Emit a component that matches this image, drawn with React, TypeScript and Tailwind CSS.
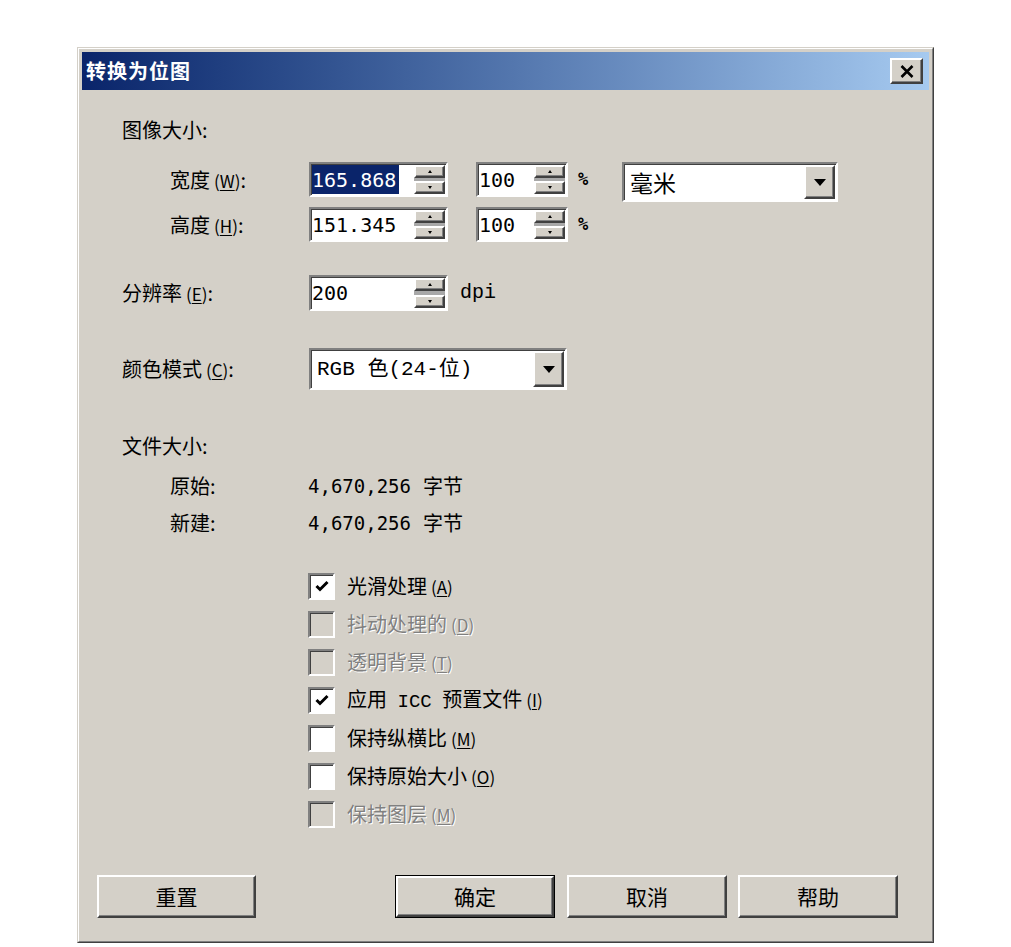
import React from "react";

const cjk = "font-['Noto_Sans_CJK_SC','Liberation_Sans',sans-serif]";
const mono = "font-['DejaVu_Sans_Mono','Noto_Sans_CJK_SC',monospace]";
const raised =
  "border-2 border-t-white border-l-white border-r-[#404040] border-b-[#404040] shadow-[inset_-1px_-1px_0_#808080] bg-[#d4d0c8]";
const sunken =
  "border-2 border-t-[#808080] border-l-[#808080] border-r-white border-b-white shadow-[inset_1px_1px_0_#404040]";
const disabledText = "text-[#808080] [text-shadow:1px_1px_0_#ffffff]";

const Key: React.FC<{ k: string }> = ({ k }) => (
  <span className="ml-[4px] text-[17px]">
    (<span className="underline underline-offset-2">{k}</span>)
  </span>
);

const Arrow: React.FC<{ up?: boolean }> = ({ up }) => (
  <svg width="4" height="3" viewBox="0 0 4 3">
    <path d={up ? "M2 0 L4 3 L0 3 Z" : "M0 0 L4 0 L2 3 Z"} fill="#000" />
  </svg>
);

const Spinner: React.FC = () => (
  <div className="w-[31px] h-full flex flex-col justify-between bg-[#a8a8a8] mr-[1px]">
    <div className={`${raised} h-[13px] flex items-center justify-center`}>
      <Arrow up />
    </div>
    <div className={`${raised} h-[13px] flex items-center justify-center`}>
      <Arrow />
    </div>
  </div>
);

const SpinField: React.FC<{ value: string; w: string; selected?: boolean }> = ({ value, w, selected }) => (
  <div className={`${sunken} ${w} h-full bg-white flex items-stretch py-[1px]`}>
    <div className={`flex-1 flex items-center pl-[1px] ${mono} text-[20px] leading-none`}>
      {selected ? (
        <span className="bg-[#0a246a] text-white h-[29px] flex items-center pr-[3px]">{value}</span>
      ) : (
        <span className="text-black">{value}</span>
      )}
    </div>
    <Spinner />
  </div>
);

const Combo: React.FC<{ text: string; w: string; h: string; textClass: string }> = ({ text, w, h, textClass }) => (
  <div className={`${sunken} ${w} ${h} bg-white flex items-stretch p-[1px] self-start`}>
    <div className={`flex-1 flex items-center pl-[5px] text-black ${textClass}`}>{text}</div>
    <div className={`${raised} w-[31px] flex items-center justify-center`}>
      <svg width="12" height="7" viewBox="0 0 12 7">
        <path d="M0 0 L12 0 L6 7 Z" fill="#000" />
      </svg>
    </div>
  </div>
);

const Check: React.FC<{ label: React.ReactNode; checked?: boolean; disabled?: boolean }> = ({
  label,
  checked,
  disabled,
}) => (
  <div className="h-[38px] flex items-center gap-[12px]">
    <div
      className={`${sunken} w-[27px] h-[27px] flex items-center justify-center ${
        disabled ? "bg-[#d4d0c8]" : "bg-white"
      }`}
    >
      {checked && (
        <svg width="14" height="12" viewBox="0 0 14 12">
          <path d="M1.5 6 L5 9.5 L12.5 2" stroke="#000" strokeWidth="3" fill="none" />
        </svg>
      )}
    </div>
    <span className={`text-[20px] leading-none ${disabled ? disabledText : "text-black"}`}>{label}</span>
  </div>
);

const Btn: React.FC<{ label: string; w: string; ml?: string; def?: boolean }> = ({ label, w, ml = "", def }) => (
  <div className={`${w} ${ml} h-full ${def ? "border border-black" : ""}`}>
    <div className={`${raised} h-full flex items-center justify-center text-[21px] text-black`}>{label}</div>
  </div>
);

export default function App() {
  return (
    <div className={`min-h-screen w-full bg-white pt-[47px] pl-[77px] ${cjk}`}>
      <div className="w-[857px] h-[896px] border border-t-[#d4d0c8] border-l-[#d4d0c8] border-r-[#404040] border-b-[#404040] bg-[#d4d0c8]">
        <div className="h-full border border-t-white border-l-white border-r-[#808080] border-b-[#808080] p-[3px] flex flex-col">
          <div className="h-[38px] flex items-center justify-between pl-[4px] pr-[6px] bg-gradient-to-r from-[#0a246a] to-[#a6caf0]">
            <span className="text-white font-bold text-[20px] leading-none tracking-[1px]">转换为位图</span>
            <div className={`${raised} w-[33px] h-[26px] flex items-center justify-center`}>
              <svg width="14" height="13" viewBox="0 0 14 13">
                <path d="M1.5 1 L12.5 12 M12.5 1 L1.5 12" stroke="#000" strokeWidth="2.6" />
              </svg>
            </div>
          </div>

          <div className="flex flex-col pl-[40px] text-[20px] text-black leading-none">
            <div className="mt-[28px] h-[24px] flex items-center">图像大小:</div>

            <div className="mt-[20px] h-[35px] flex items-center">
              <div className="w-[187px] pl-[48px]">
                宽度<Key k="W" />:
              </div>
              <SpinField value="165.868" w="w-[139px]" selected />
              <div className="ml-[28px] h-full">
                <SpinField value="100" w="w-[92px]" />
              </div>
              <span className={`ml-[10px] w-[14px] ${mono} text-[17px] font-bold`}>%</span>
              <div className="ml-[30px] h-full">
                <Combo text="毫米" w="w-[216px]" h="h-[40px]" textClass="text-[23px]" />
              </div>
            </div>

            <div className="mt-[10px] h-[35px] flex items-center">
              <div className="w-[187px] pl-[48px]">
                高度<Key k="H" />:
              </div>
              <SpinField value="151.345" w="w-[139px]" />
              <div className="ml-[28px] h-full">
                <SpinField value="100" w="w-[92px]" />
              </div>
              <span className={`ml-[10px] w-[14px] ${mono} text-[17px] font-bold`}>%</span>
            </div>

            <div className="mt-[33px] h-[36px] flex items-center">
              <div className="w-[187px]">
                分辨率<Key k="E" />:
              </div>
              <SpinField value="200" w="w-[139px]" />
              <span className="ml-[12px] font-['Liberation_Mono',monospace] text-[20px]">dpi</span>
            </div>

            <div className="mt-[37px] h-[42px] flex items-center">
              <div className="w-[187px]">
                颜色模式<Key k="C" />:
              </div>
              <Combo
                text="RGB 色(24-位)"
                w="w-[258px]"
                h="h-[42px]"
                textClass="font-['Liberation_Mono','Noto_Sans_CJK_SC',monospace] text-[21px]"
              />
            </div>

            <div className="mt-[44px] h-[24px] flex items-center">文件大小:</div>
            <div className="mt-[16px] h-[24px] flex items-center">
              <div className="w-[186px] pl-[48px]">原始:</div>
              <span className={`${mono} text-[19px]`}>4,670,256</span>
              <span className="ml-[12px]">字节</span>
            </div>
            <div className="mt-[13px] h-[24px] flex items-center">
              <div className="w-[186px] pl-[48px]">新建:</div>
              <span className={`${mono} text-[19px]`}>4,670,256</span>
              <span className="ml-[12px]">字节</span>
            </div>

            <div className="mt-[32px] pl-[186px] flex flex-col">
              <Check checked label={<>光滑处理<Key k="A" /></>} />
              <Check disabled label={<>抖动处理的<Key k="D" /></>} />
              <Check disabled label={<>透明背景<Key k="T" /></>} />
              <Check
                checked
                label={
                  <>
                    应用 <span className="font-['Liberation_Mono',monospace] text-[19px] mx-[6px]">ICC</span> 预置文件
                    <Key k="I" />
                  </>
                }
              />
              <Check label={<>保持纵横比<Key k="M" /></>} />
              <Check label={<>保持原始大小<Key k="O" /></>} />
              <Check disabled label={<>保持图层<Key k="M" /></>} />
            </div>
          </div>

          <div className="mt-[42px] h-[43px] pl-[15px] flex">
            <Btn label="重置" w="w-[159px]" />
            <Btn label="确定" w="w-[160px]" ml="ml-[139px]" def />
            <Btn label="取消" w="w-[160px]" ml="ml-[12px]" />
            <Btn label="帮助" w="w-[160px]" ml="ml-[11px]" />
          </div>
        </div>
      </div>
    </div>
  );
}
